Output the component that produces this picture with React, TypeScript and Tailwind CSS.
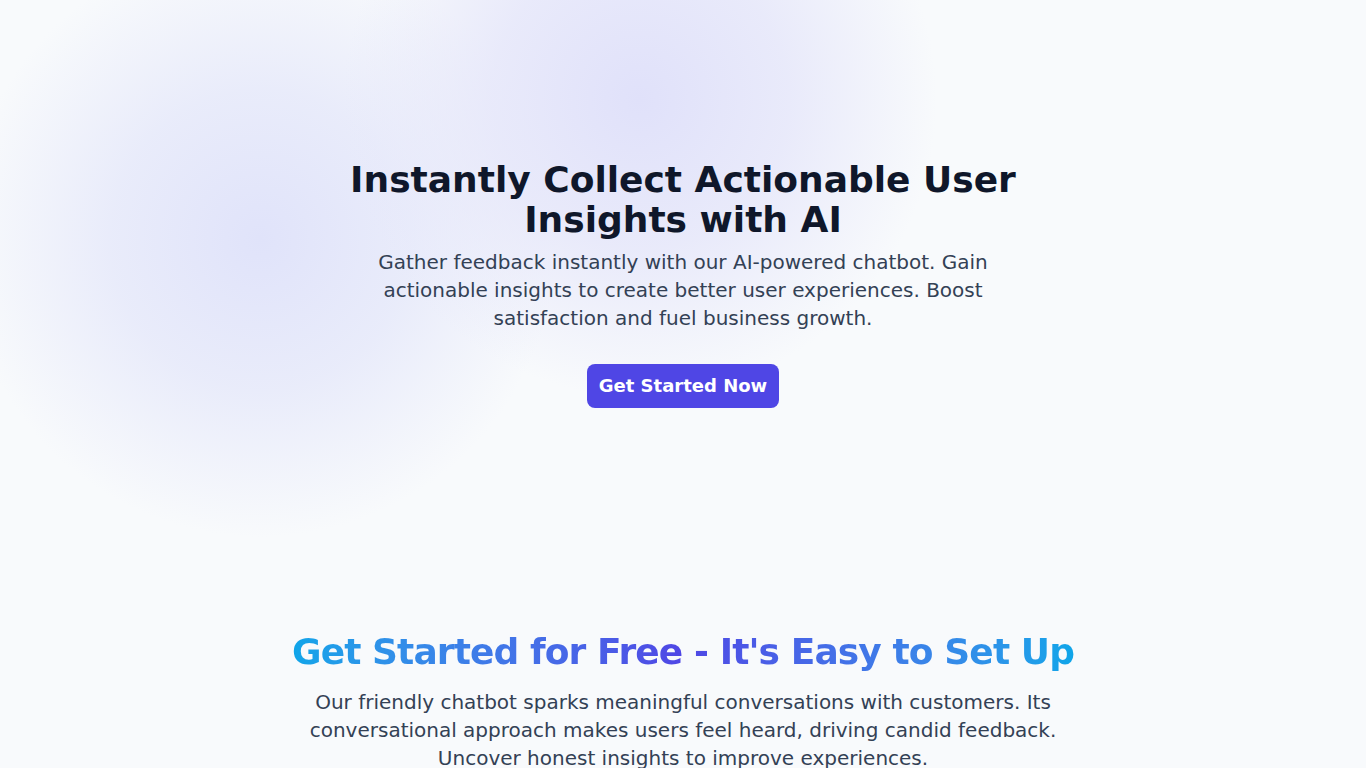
import React from "react";

export default function App() {
  return (
    <div
      className="min-h-screen w-full bg-[#f8fafc] overflow-hidden"
      style={{ fontFamily: '"DejaVu Sans", sans-serif' }}
    >
      <section className="relative px-4 pt-40 pb-40">
        <div className="pointer-events-none absolute left-[-40px] top-[-60px] h-[600px] w-[600px] rounded-full bg-[radial-gradient(circle,rgba(224,227,250,1)_0%,rgba(229,232,250,0.8)_35%,rgba(248,250,252,0)_70%)]" />
        <div className="pointer-events-none absolute left-[340px] top-[-200px] h-[600px] w-[600px] rounded-full bg-[radial-gradient(circle,rgba(224,225,250,1)_0%,rgba(229,230,250,0.8)_35%,rgba(248,250,252,0)_70%)]" />
        <div className="relative mx-auto flex max-w-2xl flex-col items-center text-center">
          <h1 className="text-4xl font-bold text-[#0f172a]">
            Instantly Collect Actionable User Insights with AI
          </h1>
          <p className="mt-2 text-xl text-[#334155]">
            Gather feedback instantly with our AI-powered chatbot. Gain actionable
            insights to create better user experiences. Boost satisfaction and fuel
            business growth.
          </p>
          <button className="mt-8 rounded-lg bg-[#4f46e5] px-3 py-2 text-lg font-bold text-white">
            Get Started Now
          </button>
        </div>
      </section>
      <section className="px-4 pt-16 pb-16">
        <div className="mx-auto flex max-w-3xl flex-col items-center text-center">
          <h2 className="whitespace-nowrap bg-gradient-to-r from-[#0ea5e9] via-[#4f46e5] to-[#0ea5e9] bg-clip-text text-4xl font-bold tracking-tight text-transparent">
            Get Started for Free - It's Easy to Set Up
          </h2>
          <p className="mt-4 text-xl text-[#334155]">
            Our friendly chatbot sparks meaningful conversations with customers. Its
            conversational approach makes users feel heard, driving candid feedback.
            Uncover honest insights to improve experiences.
          </p>
        </div>
      </section>
    </div>
  );
}
